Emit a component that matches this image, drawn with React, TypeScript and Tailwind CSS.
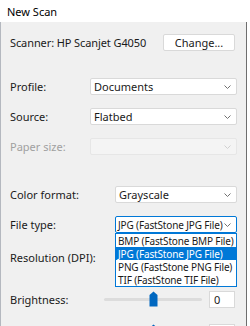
function Chevron({ faded }: { faded?: boolean }) {
  return (
    <svg
      width="7"
      height="4"
      viewBox="0 0 7 4"
      className={faded ? "text-[#d0d0d0]" : "text-[#707070]"}
    >
      <path d="M0.5 0.5 L3.5 3.5 L6.5 0.5" fill="none" stroke="currentColor" strokeWidth="1" />
    </svg>
  );
}

function Select({ value, disabled }: { value?: string; disabled?: boolean }) {
  return (
    <div
      className={
        disabled
          ? "flex-1 h-[17px] flex items-center justify-between pl-[3px] pr-[5px] rounded-[2px] border border-[#e6e6e6] bg-[#f4f4f4]"
          : "flex-1 h-[17px] flex items-center justify-between pl-[3px] pr-[5px] rounded-[2px] border border-[#d9d9d9] bg-white"
      }
    >
      <span>{value}</span>
      <Chevron faded={disabled} />
    </div>
  );
}

function Separator({ mt }: { mt: string }) {
  return <div className={`${mt} h-px bg-[#a6a6a6] mr-[1px]`} />;
}

function Thumb() {
  return (
    <svg width="9" height="16" viewBox="0 0 9 16" className="absolute left-[45px] top-[-7px]">
      <path d="M0.5 4 L4.5 0.5 L8.5 4 L8.5 15.5 L0.5 15.5 Z" fill="#0067c0" />
    </svg>
  );
}

const item = "h-[13px] flex items-center pl-[2px] whitespace-nowrap text-[10px] tracking-[-0.15px]";

export default function App() {
  return (
    <div className="w-[250px] h-[326px] overflow-hidden bg-white font-['Noto_Sans',sans-serif] text-[11px] text-[#1a1a1a] leading-none">
      {/* Title bar */}
      <div className="h-[22px] flex items-center pl-[7px] text-[11px] text-black">New Scan</div>

      <div className="flex h-[304px]">
        <div className="w-px bg-[#b4b8bf]" />
        <div className="w-[245px] bg-[#f0f0f0] pl-[9px] pr-[9px] flex flex-col">
          {/* Scanner */}
          <div className="mt-[12px] flex items-center h-[17px]">
            <span className="tracking-[-0.1px]">Scanner: HP Scanjet G4050</span>
            <div className="ml-auto mr-[2px] w-[72px] h-[17px] flex items-center justify-center bg-white border border-[#d9d9d9] rounded-[2px]">
              Change...
            </div>
          </div>

          <Separator mt="mt-[14px]" />

          <div className="mt-[13px] flex items-center">
            <span className="w-[80px]">Profile:</span>
            <Select value="Documents" />
          </div>
          <div className="mt-[13px] flex items-center">
            <span className="w-[80px]">Source:</span>
            <Select value="Flatbed" />
          </div>
          <div className="mt-[13px] flex items-center">
            <span className="w-[80px] text-[#a0a0a0]">Paper size:</span>
            <Select disabled />
          </div>

          <Separator mt="mt-[15px]" />

          <div className="mt-[16px] flex items-center">
            <span className="w-[105px]">Color format:</span>
            <Select value="Grayscale" />
          </div>
          <div className="mt-[13px] flex items-center">
            <span className="w-[105px]">File type:</span>
            <div className="relative flex-1">
              <div className="h-[17px] flex items-center justify-between pl-[2px] pr-[5px] rounded-[2px] border border-[#0078d7] bg-white">
                <span className="whitespace-nowrap text-[10px] tracking-[-0.15px]">JPG (FastStone JPG File)</span>
                <Chevron />
              </div>
              <div className="absolute z-10 left-0 top-[17px] w-full border border-[#0078d7] bg-white flex flex-col">
                <div className={item}>BMP (FastStone BMP File)</div>
                <div className={`${item} bg-[#0078d7] text-white`}>JPG (FastStone JPG File)</div>
                <div className={item}>PNG (FastStone PNG File)</div>
                <div className={item}>TIF (FastStone TIF File)</div>
              </div>
            </div>
          </div>
          <div className="mt-[16px] flex items-center">
            <span className="w-[105px]">Resolution (DPI):</span>
            <Select />
          </div>

          <Separator mt="mt-[11px]" />

          <div className="mt-[14px] flex items-center h-[17px]">
            <span className="w-[94px]">Brightness:</span>
            <div className="relative w-[98px] h-[3px] bg-[#dcdcdc] rounded-full">
              <Thumb />
            </div>
            <div className="ml-[7px] w-[26px] h-[17px] flex items-center pl-[4px] bg-white border border-[#d9d9d9]">0</div>
          </div>
          <div className="mt-[16px] flex items-center h-[17px]">
            <span className="w-[94px]" />
            <div className="relative w-[98px] h-[3px] bg-[#dcdcdc] rounded-full">
              <Thumb />
            </div>
            <div className="ml-[7px] w-[26px] h-[17px] bg-white border border-[#d9d9d9]" />
          </div>
        </div>
        <div className="w-px bg-[#6e6e6e]" />
        <div className="flex-1 bg-white" />
      </div>
    </div>
  );
}
